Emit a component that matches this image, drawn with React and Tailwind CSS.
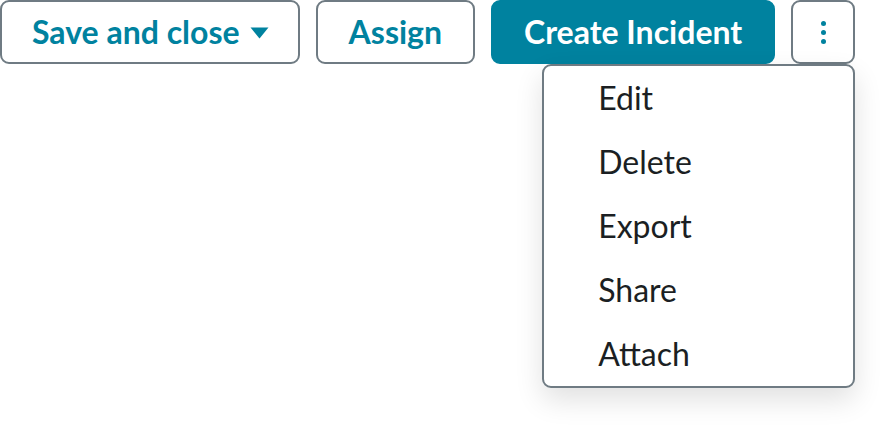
import { useState } from 'react';

const items = ['Edit', 'Delete', 'Export', 'Share', 'Attach'];

export default function App() {
    const [open, setOpen] = useState(true);

    return (
        <div className="min-h-screen bg-white font-['Lato',_'Noto_Sans',_sans-serif]">
            <div className="flex items-start gap-4">
                <button
                    type="button"
                    className="h-16 pl-[30px] pr-[29px] flex items-center gap-[10px] rounded-[9px] border-2 border-[#6f7b83] bg-white text-[#00829f] text-[32px] font-bold"
                >
                    Save and close
                    <svg width="19" height="12" viewBox="0 0 19 12" className="mt-[1px]">
                        <path d="M0.5 0.5h18l-9 11z" fill="currentColor" />
                    </svg>
                </button>

                <button
                    type="button"
                    className="h-16 px-[31px] flex items-center rounded-[9px] border-2 border-[#6f7b83] bg-white text-[#00829f] text-[32px] font-bold"
                >
                    Assign
                </button>

                <button
                    type="button"
                    className="h-16 px-[31px] flex items-center rounded-[9px] border-2 border-[#00829f] bg-[#00829f] text-white text-[32px] font-bold"
                >
                    Create Incident
                </button>

                <div className="relative">
                    <button
                        type="button"
                        onClick={() => setOpen(!open)}
                        className="h-16 w-16 flex flex-col items-center justify-center gap-[4px] rounded-[9px] border-2 border-[#6f7b83] bg-white"
                    >
                        <span className="w-[5px] h-[5px] rounded-full bg-[#00829f]"></span>
                        <span className="w-[5px] h-[5px] rounded-full bg-[#00829f]"></span>
                        <span className="w-[5px] h-[5px] rounded-full bg-[#00829f]"></span>
                    </button>

                    {open && (
                        <div className="absolute right-0 top-full w-[313px] rounded-[9px] border-2 border-[#6f7b83] bg-white shadow-[0_12px_28px_rgba(0,0,0,0.12)]">
                            {items.map(item => (
                                <div
                                    key={item}
                                    className="h-16 flex items-center pl-[54px] text-[32px] text-[#1b1f23]"
                                >
                                    {item}
                                </div>
                            ))}
                        </div>
                    )}
                </div>
            </div>
        </div>
    );
}
